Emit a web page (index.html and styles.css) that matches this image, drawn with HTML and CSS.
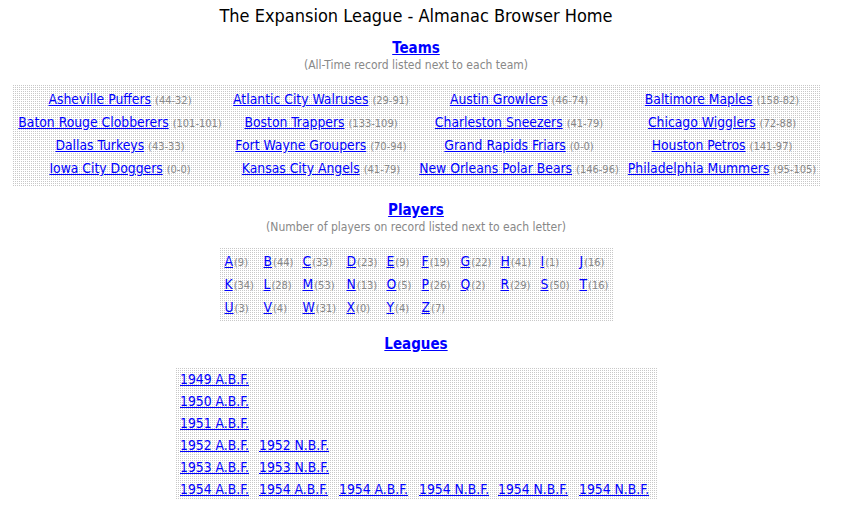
FILE: index.html
```html
<!DOCTYPE html>
<html>
<head>
<meta charset="utf-8">
<title>The Expansion League - Almanac Browser Home</title>
<link rel="stylesheet" href="styles.css">
</head>
<body>
<div class="page">
<h1 class="title">The Expansion League - Almanac Browser Home</h1>

<div class="section">
  <a class="heading" href="#">Teams</a>
  <div class="note">(All-Time record listed next to each team)</div>
</div>
<div class="box teams">
  <div class="cell"><a href="#">Asheville Puffers</a> <span class="rec">(44-32)</span></div>
  <div class="cell"><a href="#">Atlantic City Walruses</a> <span class="rec">(29-91)</span></div>
  <div class="cell"><a href="#">Austin Growlers</a> <span class="rec">(46-74)</span></div>
  <div class="cell"><a href="#">Baltimore Maples</a> <span class="rec">(158-82)</span></div>
  <div class="cell"><a href="#">Baton Rouge Clobberers</a> <span class="rec">(101-101)</span></div>
  <div class="cell"><a href="#">Boston Trappers</a> <span class="rec">(133-109)</span></div>
  <div class="cell"><a href="#">Charleston Sneezers</a> <span class="rec">(41-79)</span></div>
  <div class="cell"><a href="#">Chicago Wigglers</a> <span class="rec">(72-88)</span></div>
  <div class="cell"><a href="#">Dallas Turkeys</a> <span class="rec">(43-33)</span></div>
  <div class="cell"><a href="#">Fort Wayne Groupers</a> <span class="rec">(70-94)</span></div>
  <div class="cell"><a href="#">Grand Rapids Friars</a> <span class="rec">(0-0)</span></div>
  <div class="cell"><a href="#">Houston Petros</a> <span class="rec">(141-97)</span></div>
  <div class="cell"><a href="#">Iowa City Doggers</a> <span class="rec">(0-0)</span></div>
  <div class="cell"><a href="#">Kansas City Angels</a> <span class="rec">(41-79)</span></div>
  <div class="cell"><a href="#">New Orleans Polar Bears</a> <span class="rec">(146-96)</span></div>
  <div class="cell"><a href="#">Philadelphia Mummers</a> <span class="rec">(95-105)</span></div>
</div>

<div class="section">
  <a class="heading" href="#">Players</a>
  <div class="note">(Number of players on record listed next to each letter)</div>
</div>
<div class="box players">
  <div class="pcell"><a href="#">A</a><span class="rec">(9)</span></div>
  <div class="pcell"><a href="#">B</a><span class="rec">(44)</span></div>
  <div class="pcell"><a href="#">C</a><span class="rec">(33)</span></div>
  <div class="pcell"><a href="#">D</a><span class="rec">(23)</span></div>
  <div class="pcell"><a href="#">E</a><span class="rec">(9)</span></div>
  <div class="pcell"><a href="#">F</a><span class="rec">(19)</span></div>
  <div class="pcell"><a href="#">G</a><span class="rec">(22)</span></div>
  <div class="pcell"><a href="#">H</a><span class="rec">(41)</span></div>
  <div class="pcell"><a href="#">I</a><span class="rec">(1)</span></div>
  <div class="pcell"><a href="#">J</a><span class="rec">(16)</span></div>
  <div class="pcell"><a href="#">K</a><span class="rec">(34)</span></div>
  <div class="pcell"><a href="#">L</a><span class="rec">(28)</span></div>
  <div class="pcell"><a href="#">M</a><span class="rec">(53)</span></div>
  <div class="pcell"><a href="#">N</a><span class="rec">(13)</span></div>
  <div class="pcell"><a href="#">O</a><span class="rec">(5)</span></div>
  <div class="pcell"><a href="#">P</a><span class="rec">(26)</span></div>
  <div class="pcell"><a href="#">Q</a><span class="rec">(2)</span></div>
  <div class="pcell"><a href="#">R</a><span class="rec">(29)</span></div>
  <div class="pcell"><a href="#">S</a><span class="rec">(50)</span></div>
  <div class="pcell"><a href="#">T</a><span class="rec">(16)</span></div>
  <div class="pcell"><a href="#">U</a><span class="rec">(3)</span></div>
  <div class="pcell"><a href="#">V</a><span class="rec">(4)</span></div>
  <div class="pcell"><a href="#">W</a><span class="rec">(31)</span></div>
  <div class="pcell"><a href="#">X</a><span class="rec">(0)</span></div>
  <div class="pcell"><a href="#">Y</a><span class="rec">(4)</span></div>
  <div class="pcell"><a href="#">Z</a><span class="rec">(7)</span></div>
</div>

<div class="section">
  <a class="heading" href="#">Leagues</a>
</div>
<div class="box leagues">
  <div class="lrow"><a href="#">1949 A.B.F.</a></div>
  <div class="lrow"><a href="#">1950 A.B.F.</a></div>
  <div class="lrow"><a href="#">1951 A.B.F.</a></div>
  <div class="lrow"><a href="#">1952 A.B.F.</a><a href="#">1952 N.B.F.</a></div>
  <div class="lrow"><a href="#">1953 A.B.F.</a><a href="#">1953 N.B.F.</a></div>
  <div class="lrow"><a href="#">1954 A.B.F.</a><a href="#">1954 A.B.F.</a><a href="#">1954 A.B.F.</a><a href="#">1954 N.B.F.</a><a href="#">1954 N.B.F.</a><a href="#">1954 N.B.F.</a></div>
</div>
</div>
</body>
</html>
```
FILE: styles.css
```css
html, body {
  margin: 0;
  padding: 0;
  background: #fff;
}
body {
  font-family: "DejaVu Sans Condensed", "DejaVu Sans", sans-serif;
  font-size: 13.8px;
  color: #000;
}
.page {
  width: 832px;
}
a {
  color: #0000ff;
  text-decoration: underline;
}
.title {
  margin: 6px 0 0;
  font-size: 18px;
  font-weight: normal;
  line-height: 20px;
  text-align: center;
}
.section {
  text-align: center;
  margin-top: 13px;
}
.heading {
  display: block;
  width: max-content;
  margin: 0 auto;
  font-size: 15px;
  font-weight: bold;
  line-height: 18px;
}
.note {
  margin-top: 1px;
  font-size: 12px;
  line-height: 14px;
  color: #888;
}
.rec {
  font-size: 11px;
  color: #888;
}
.box {
  background-color: #c8c8c8;
  background-image: linear-gradient(90deg, #fff 1px, transparent 1px), linear-gradient(#fff 1px, transparent 1px);
  background-size: 2px 2px;
  margin-left: auto;
  margin-right: auto;
  margin-top: 12px;
}
.teams {
  width: 808px;
  padding: 4px 0 6px;
  display: grid;
  grid-template-columns: 216px 186px 210px 196px;
  grid-auto-rows: 23px;
}
.cell {
  text-align: center;
  white-space: nowrap;
  line-height: 23px;
}
.teams + .section { margin-top: 15px; }
.players + .section { margin-top: 14px; }
.players {
  width: 389px;
  margin-top: 13px;
  padding: 3px 0 2px 6px;
  display: grid;
  grid-template-columns: 39px 39px 44px 40px 35px 39px 40px 40px 39px 34px;
  grid-auto-rows: 23px;
}
.pcell {
  white-space: nowrap;
  line-height: 23px;
}
.pcell .rec { margin-left: 1px; }
.leagues {
  width: 477px;
  padding: 1px 0 0 5px;
  margin-top: 14px;
}
.lrow {
  display: grid;
  grid-template-columns: 79px 80px 80px 79px 81px 78px;
  height: 22px;
  line-height: 22px;
  white-space: nowrap;
}
```
